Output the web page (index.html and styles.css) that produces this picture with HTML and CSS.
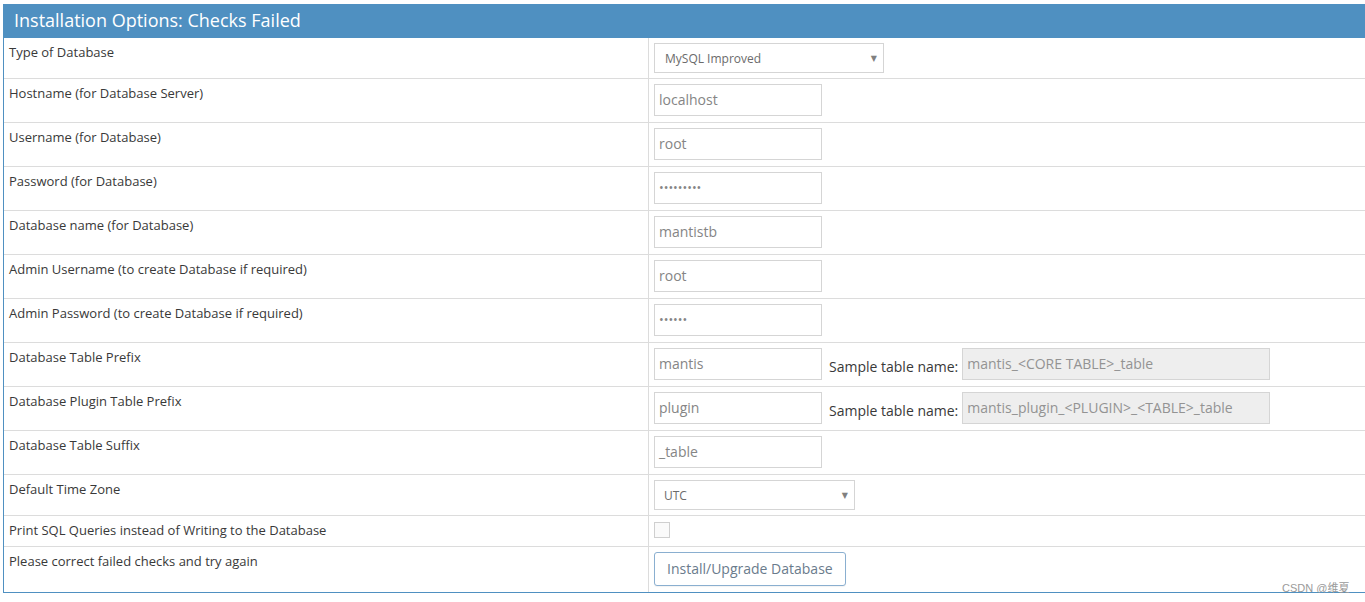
FILE: index.html
```html
<!DOCTYPE html>
<html>
<head>
<meta charset="utf-8">
<title>Installation Options</title>
<link rel="stylesheet" href="styles.css">
</head>
<body>
<div class="widget">
  <div class="widget-header">Installation Options: Checks Failed</div>
  <div class="rows">
    <div class="row row-select">
      <div class="label">Type of Database</div>
      <div class="field"><div class="select sel-db"><span>MySQL Improved</span><span class="caret">▼</span></div></div>
    </div>
    <div class="row">
      <div class="label">Hostname (for Database Server)</div>
      <div class="field"><div class="input">localhost</div></div>
    </div>
    <div class="row">
      <div class="label">Username (for Database)</div>
      <div class="field"><div class="input">root</div></div>
    </div>
    <div class="row">
      <div class="label">Password (for Database)</div>
      <div class="field"><div class="input pw">•••••••••</div></div>
    </div>
    <div class="row">
      <div class="label">Database name (for Database)</div>
      <div class="field"><div class="input">mantistb</div></div>
    </div>
    <div class="row">
      <div class="label">Admin Username (to create Database if required)</div>
      <div class="field"><div class="input">root</div></div>
    </div>
    <div class="row">
      <div class="label">Admin Password (to create Database if required)</div>
      <div class="field"><div class="input pw">••••••</div></div>
    </div>
    <div class="row">
      <div class="label">Database Table Prefix</div>
      <div class="field"><div class="input">mantis</div><span class="sample">Sample table name:</span><div class="input readonly">mantis_&lt;CORE TABLE&gt;_table</div></div>
    </div>
    <div class="row">
      <div class="label">Database Plugin Table Prefix</div>
      <div class="field"><div class="input">plugin</div><span class="sample">Sample table name:</span><div class="input readonly">mantis_plugin_&lt;PLUGIN&gt;_&lt;TABLE&gt;_table</div></div>
    </div>
    <div class="row">
      <div class="label">Database Table Suffix</div>
      <div class="field"><div class="input">_table</div></div>
    </div>
    <div class="row row-select">
      <div class="label">Default Time Zone</div>
      <div class="field"><div class="select sel-tz"><span>UTC</span><span class="caret">▼</span></div></div>
    </div>
    <div class="row row-check">
      <div class="label">Print SQL Queries instead of Writing to the Database</div>
      <div class="field"><div class="checkbox"></div></div>
    </div>
    <div class="row row-btn">
      <div class="label">Please correct failed checks and try again</div>
      <div class="field"><div class="btn">Install/Upgrade Database</div></div>
    </div>
  </div>
  <div class="watermark">CSDN @维夏</div>
</div>
</body>
</html>
```

FILE: styles.css
```css
html, body {
  margin: 0;
  padding: 0;
  overflow: hidden;
  background: #fff;
}
body {
  padding: 4px 0 0 3px;
  font-family: "Open Sans", "Noto Sans", sans-serif;
  font-size: 13px;
  color: #393939;
}
.widget {
  position: relative;
  width: 1400px;
  border-left: 1px solid #4f90c1;
  border-bottom: 1px solid #4f90c1;
}
.widget-header {
  background: #4f90c1;
  color: #fff;
  height: 34px;
  line-height: 33px;
  font-size: 18px;
  padding-left: 11px;
  margin-left: -1px;
}
.row {
  display: grid;
  grid-template-columns: 645px 1fr;
  border-top: 1px solid #dcdcdc;
  min-height: 43px;
}
.rows .row:first-child {
  border-top: none;
}
.row-select {
  min-height: 40px;
}
.row-check {
  min-height: 30px;
}
.row-btn {
  min-height: 45px;
}
.label {
  padding: 4px 5px;
  line-height: 20px;
  border-right: 1px solid #dcdcdc;
}
.field {
  display: flex;
  align-items: center;
  align-self: start;
  padding: 5px 5px;
}
.input {
  box-sizing: border-box;
  width: 168px;
  height: 32px;
  border: 1px solid #d5d5d5;
  padding: 0 4px;
  font-size: 14px;
  line-height: 30px;
  color: #858585;
  white-space: nowrap;
}
.input.pw {
  font-size: 12.5px;
  letter-spacing: 0;
  color: #858585;
}
.input.readonly {
  width: 308px;
  background: #eeeeee;
  color: #939393;
}
.sample {
  margin-left: 7px;
  margin-right: 4px;
  font-size: 14px;
  color: #393939;
  padding-top: 4px;
}
.select {
  box-sizing: border-box;
  height: 30px;
  border: 1px solid #d5d5d5;
  display: flex;
  align-items: center;
  justify-content: space-between;
  padding: 0 6px 0 10px;
  font-size: 12px;
  color: #6b6b6b;
}
.sel-db {
  width: 230px;
}
.sel-tz {
  width: 201px;
  padding-left: 9px;
}
.caret {
  font-family: "DejaVu Sans", sans-serif;
  font-size: 8px;
  color: #808080;
}
.checkbox {
  box-sizing: border-box;
  width: 16px;
  height: 16px;
  border: 1px solid #cfcfcf;
  background: #fafafa;
  margin: 1px 0 3px;
}
.btn {
  box-sizing: border-box;
  height: 34px;
  padding: 0 12px;
  border: 1px solid #8aafd0;
  border-radius: 3px;
  font-size: 14px;
  line-height: 32px;
  color: #6a7b8c;
  background: #fff;
  box-shadow: 0 1px 1px rgba(0,0,0,0.05);
}
.watermark {
  position: absolute;
  left: 1278px;
  bottom: -3px;
  font-family: "Liberation Sans", "Noto Sans CJK SC", sans-serif;
  font-size: 11px;
  color: #9a9a9a;
}
```
